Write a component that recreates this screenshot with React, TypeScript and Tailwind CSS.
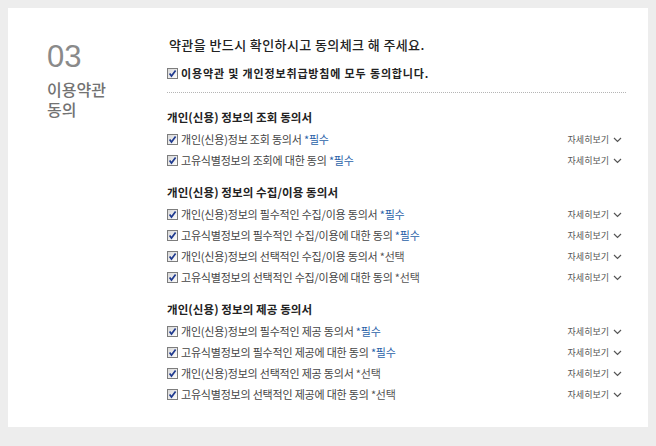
import React from "react";

const KR = { fontFamily: '"Noto Sans CJK KR", "Noto Sans", sans-serif' };

function Check() {
  return (
    <svg width="11" height="11" viewBox="0 0 11 11" className="shrink-0">
      <defs>
        <linearGradient id="cbg" x1="0" y1="0" x2="1" y2="1">
          <stop offset="0" stopColor="#d6d6d6" />
          <stop offset="1" stopColor="#ffffff" />
        </linearGradient>
      </defs>
      <rect x="0.5" y="0.5" width="10" height="10" fill="url(#cbg)" stroke="#7d7d7d" />
      <polyline points="2.6,5.4 4.5,8 8.6,2.6" fill="none" stroke="#1f3a8f" strokeWidth="1.7" />
    </svg>
  );
}

function Chevron() {
  return (
    <svg width="9" height="6" viewBox="0 0 9 6" className="ml-[4px]">
      <polyline points="1,1 4.5,4.5 8,1" fill="none" stroke="#555" strokeWidth="1.2" />
    </svg>
  );
}

type Item = { text: string; req: boolean };

const sections: { title: string; items: Item[] }[] = [
  {
    title: "개인(신용) 정보의 조회 동의서",
    items: [
      { text: "개인(신용)정보 조회 동의서", req: true },
      { text: "고유식별정보의 조회에 대한 동의", req: true },
    ],
  },
  {
    title: "개인(신용) 정보의 수집/이용 동의서",
    items: [
      { text: "개인(신용)정보의 필수적인 수집/이용 동의서", req: true },
      { text: "고유식별정보의 필수적인 수집/이용에 대한 동의", req: true },
      { text: "개인(신용)정보의 선택적인 수집/이용 동의서", req: false },
      { text: "고유식별정보의 선택적인 수집/이용에 대한 동의", req: false },
    ],
  },
  {
    title: "개인(신용) 정보의 제공 동의서",
    items: [
      { text: "개인(신용)정보의 필수적인 제공 동의서", req: true },
      { text: "고유식별정보의 필수적인 제공에 대한 동의", req: true },
      { text: "개인(신용)정보의 선택적인 제공 동의서", req: false },
      { text: "고유식별정보의 선택적인 제공에 대한 동의", req: false },
    ],
  },
];

export default function App() {
  return (
    <div className="w-[656px] h-[446px] bg-[#ededed] pt-[8px] px-[8px]" style={KR}>
      <div className="bg-white w-[640px] flex pl-[39px] pr-[22px] pt-[28px] pb-[22px]">
        <div className="w-[120px] shrink-0 pt-[5px]">
          <div
            className="text-[31px] leading-[31px] text-[#8a8a8a]"
            style={{ fontFamily: '"Liberation Sans", Arial, sans-serif' }}
          >
            03
          </div>
          <div className="mt-[7px] text-[16px] leading-[20px] text-[#727272] font-medium">
            <div className="h-[20px] flex items-center">이용약관</div>
            <div className="h-[20px] flex items-center">동의</div>
          </div>
        </div>
        <div className="flex-1">
          <div className="h-[18px] flex items-center pl-[2px] text-[13px] tracking-[0.4px] text-[#222] font-medium">
            약관을 반드시 확인하시고 동의체크 해 주세요.
          </div>
          <div className="mt-[9px] h-[20px] flex items-center">
            <Check />
            <span className="ml-[3px] text-[11px] font-bold text-[#222] tracking-[0.85px]">
              이용약관 및 개인정보취급방침에 모두 동의합니다.
            </span>
          </div>
          <div className="mt-[9px] border-t border-dotted border-[#b5b5b5]" />
          <div className="mt-[14px]">
            {sections.map((s, si) => (
              <div key={si} className={si > 0 ? "mt-[11px]" : ""}>
                <div className="h-[22px] flex items-center text-[11.5px] tracking-[0.1px] font-bold text-[#222]">
                  {s.title}
                </div>
                {s.items.map((it, ii) => (
                  <div key={ii} className="h-[21px] flex items-center">
                    <Check />
                    <span className="ml-[3px] text-[11px] tracking-[-0.2px] text-[#444]">
                      {it.text}{" "}
                      {it.req ? (
                        <span className="text-[#2a62a8]">*필수</span>
                      ) : (
                        <span className="text-[#555]">*선택</span>
                      )}
                    </span>
                    <div className="ml-auto flex items-center text-[9px] text-[#555] pr-[4px]">
                      자세히보기
                      <Chevron />
                    </div>
                  </div>
                ))}
              </div>
            ))}
          </div>
        </div>
      </div>
    </div>
  );
}
